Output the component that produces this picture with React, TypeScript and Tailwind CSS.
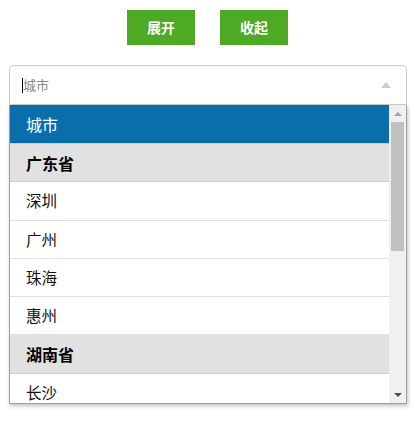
import React from "react";

const font = { fontFamily: '"Microsoft YaHei", "Noto Sans CJK SC", "Liberation Sans", sans-serif' };

type Row = { label: string; kind: "active" | "group" | "item" };

const rows: Row[] = [
  { label: "城市", kind: "active" },
  { label: "广东省", kind: "group" },
  { label: "深圳", kind: "item" },
  { label: "广州", kind: "item" },
  { label: "珠海", kind: "item" },
  { label: "惠州", kind: "item" },
  { label: "湖南省", kind: "group" },
  { label: "长沙", kind: "item" },
];

export default function App() {
  return (
    <div className="w-[419px] h-[426px] bg-white" style={font}>
      <div className="flex justify-center gap-[25px] pt-[10px] pr-[4px]">
        <button className="w-[68px] h-[35px] bg-[#4eaa25] text-white text-[14px] font-bold">展开</button>
        <button className="w-[68px] h-[35px] bg-[#4eaa25] text-white text-[14px] font-bold">收起</button>
      </div>
      <div className="ml-[9px] mt-[20px] w-[398px]">
        <div className="h-[40px] border border-[#cccccc] rounded-t-[4px] flex items-center pl-[12px] pr-[15px] bg-white">
          <span className="w-px h-[15px] bg-black" />
          <span className="text-[13px] text-[#888888] flex-1">城市</span>
          <span className="w-0 h-0 border-l-[5px] border-r-[5px] border-b-[6px] border-l-transparent border-r-transparent border-b-[#cccccc]" />
        </div>
        <div className="h-[299px] border border-t-0 border-[#a0a0a0] shadow-[1px_2px_4px_rgba(0,0,0,0.25)] flex overflow-hidden bg-white">
          <div className="flex-1 overflow-hidden">
            {rows.map((r, i) => {
              if (r.kind === "active")
                return (
                  <div key={i} className="h-[39px] bg-[#0a6eab] text-white text-[16px] flex items-center pl-[16px] border-b border-[#cccccc]">
                    {r.label}
                  </div>
                );
              if (r.kind === "group")
                return (
                  <div key={i} className="h-[38.3px] bg-[#e1e1e1] text-black text-[16px] font-bold flex items-center pl-[16px] border-b border-[#cccccc]">
                    {r.label}
                  </div>
                );
              return (
                <div key={i} className="h-[38.3px] bg-white text-[#111111] text-[15.5px] flex items-center pl-[16px] border-b border-[#e0e0e0]">
                  {r.label}
                </div>
              );
            })}
          </div>
          <div className="w-[17px] bg-[#f0f0f0] flex flex-col items-center">
            <div className="h-[17px] flex items-center justify-center">
              <span className="w-0 h-0 border-l-[4px] border-r-[4px] border-b-[4px] border-l-transparent border-r-transparent border-b-[#a3a3a3]" />
            </div>
            <div className="w-[13px] h-[129px] bg-[#c1c1c1]" />
            <div className="flex-1" />
            <div className="h-[17px] flex items-center justify-center">
              <span className="w-0 h-0 border-l-[4px] border-r-[4px] border-t-[4px] border-l-transparent border-r-transparent border-t-[#505050]" />
            </div>
          </div>
        </div>
      </div>
    </div>
  );
}
